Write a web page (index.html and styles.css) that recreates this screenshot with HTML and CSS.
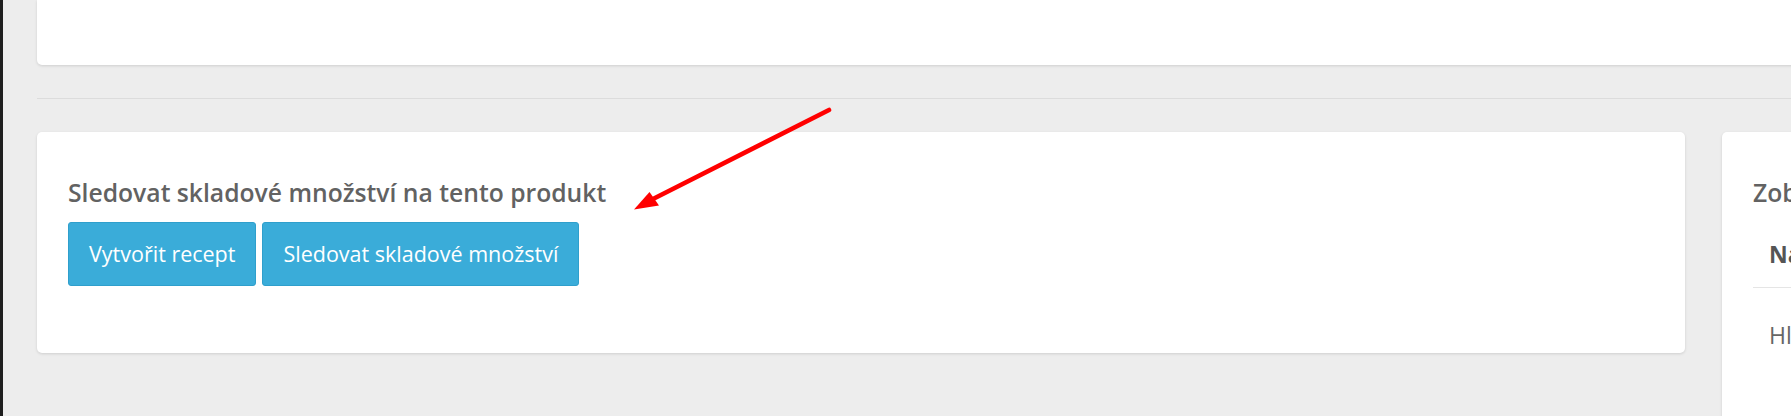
FILE: index.html
```html
<!DOCTYPE html>
<html lang="cs">
<head>
<meta charset="utf-8">
<title>Sklad</title>
<link rel="stylesheet" href="styles.css">
</head>
<body>
<div class="strip"></div>
<main class="main">
  <section class="card card-top"></section>
  <hr class="divider">
  <div class="row">
    <section class="card card-stock">
      <h4 class="card-title">Sledovat skladové množství na tento produkt</h4>
      <div class="btn-group">
        <button class="btn" type="button">Vytvořit recept</button>
        <button class="btn" type="button">Sledovat skladové množství</button>
      </div>
    </section>
    <section class="card card-side">
      <h4 class="card-title">Zobrazit stav skladu</h4>
      <table class="table">
        <thead><tr><th>Název skladu</th></tr></thead>
        <tbody><tr><td>Hlavní sklad</td></tr></tbody>
      </table>
    </section>
  </div>
</main>
<svg class="annotation" width="1791" height="416" viewBox="0 0 1791 416" aria-hidden="true">
  <line x1="829" y1="110" x2="652" y2="199.5" stroke="#ff0000" stroke-width="4.6" stroke-linecap="round"/>
  <polygon points="634,209.5 649.5,192 659,205.5" fill="#ff0000"/>
</svg>
</body>
</html>
```

FILE: styles.css
```css
html, body {
  margin: 0;
  padding: 0;
}

body {
  height: 416px;
  overflow: hidden;
  display: flex;
  background: #ededed;
  font-family: "Open Sans", "Liberation Sans", sans-serif;
  color: #666;
}

.strip {
  flex: none;
  width: 3px;
  background: #1e1e1e;
}

.main {
  flex: 1;
  min-width: 0;
  padding-left: 34px;
  overflow: hidden;
}

.card {
  background: #fff;
  border-radius: 5px;
  box-shadow: 0 1px 3px rgba(0, 0, 0, 0.13);
  box-sizing: border-box;
}

.card-top {
  height: 65px;
  margin-right: -20px;
  border-radius: 0 0 5px 5px;
}

.divider {
  height: 0;
  border: 0;
  border-top: 1px solid #dcdcdc;
  margin: 33px -20px 33px 0;
}

.row {
  display: flex;
  gap: 37px;
  margin-right: -400px;
  align-items: flex-start;
}

.card-stock {
  flex: none;
  width: 1648px;
  padding: 44px 31px 67px;
}

.card-side {
  flex: none;
  width: 420px;
  height: 400px;
  padding: 44px 31px;
}

.card-title {
  margin: 0 0 13px;
  font-size: 24.7px;
  line-height: 33px;
  font-weight: 600;
  color: #626262;
  white-space: nowrap;
}

.btn-group {
  display: flex;
  gap: 6px;
}

.btn {
  font-family: "Open Sans", "Liberation Sans", sans-serif;
  font-size: 21.5px;
  line-height: 30px;
  padding: 16px 20px;
  border: 1px solid #2f9fcc;
  border-radius: 3px;
  background: #3aacd9;
  color: #fff;
  cursor: pointer;
}

.table {
  width: 100%;
  border-collapse: collapse;
  margin-top: 0;
}

.table th {
  text-align: left;
  font-size: 23px;
  font-weight: 700;
  line-height: 32px;
  color: #555;
  padding: 16px 16px 17px;
  border-bottom: 1px solid #e5e5e5;
  white-space: nowrap;
}

.table td {
  font-size: 23px;
  line-height: 32px;
  color: #666;
  padding: 31px 16px;
  white-space: nowrap;
}

.annotation {
  position: absolute;
  left: 0;
  top: 0;
  pointer-events: none;
}
```
